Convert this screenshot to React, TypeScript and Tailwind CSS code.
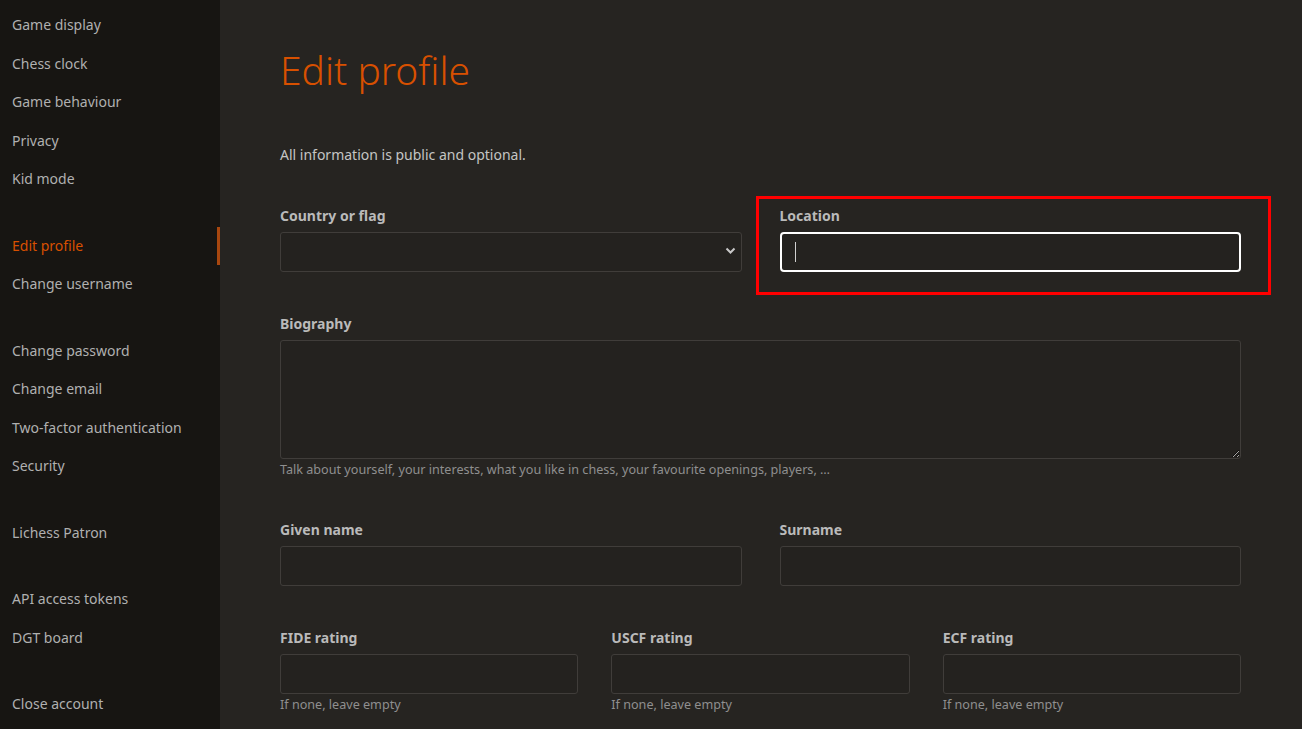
import React from 'react';

const groups = [
  ['Game display', 'Chess clock', 'Game behaviour', 'Privacy', 'Kid mode'],
  ['Edit profile', 'Change username'],
  ['Change password', 'Change email', 'Two-factor authentication', 'Security'],
  ['Lichess Patron'],
  ['API access tokens', 'DGT board'],
  ['Close account'],
];

const Sidebar = () => {
  return (
    <nav className="w-[220px] shrink-0 bg-[#171512] pt-[6px] min-h-screen">
      {groups.map((group, gi) => (
        <div key={gi} className="mb-[28px]">
          {group.map((item) => {
            const active = item === 'Edit profile';
            return (
              <a
                key={item}
                className={
                  active
                    ? 'block px-[12px] py-[10px] text-[14px] leading-[18.5px] text-[#d85000] border-r-[3px] border-[#a8470f]'
                    : 'block px-[12px] py-[10px] text-[14px] leading-[18.5px] text-[#b0b0b0]'
                }
              >
                {item}
              </a>
            );
          })}
        </div>
      ))}
    </nav>
  );
};

const inputCls =
  'block w-full h-[40px] bg-[#24221f] border border-[#403d3a] rounded-[3px] outline-none';

const Label = ({ children }: { children: React.ReactNode }) => (
  <label className="block text-[14px] leading-[20px] font-bold text-[#bababa] mb-[6px]">
    {children}
  </label>
);

const Help = ({ children }: { children: React.ReactNode }) => (
  <p className="mt-[2px] text-[12.6px] leading-[17px] text-[#8f8f8f]">{children}</p>
);

const ProfileForm = () => {
  return (
    <main className="flex-1 bg-[#262421] pl-[60px] pr-[61px] pt-[44px]">
      <h1 className="text-[39px] leading-[52px] font-light text-[#d85000] mb-[49px]">Edit profile</h1>
      <p className="text-[14px] leading-[20px] text-[#c4c4c4] mb-[41px]">All information is public and optional.</p>

      <div className="grid grid-cols-2 gap-x-[38px] mb-[42px]">
        <div>
          <Label>Country or flag</Label>
          <div className="relative">
            <select className={inputCls + ' appearance-none'} />
            <svg
              className="absolute right-[6px] top-[15px] pointer-events-none"
              width="11"
              height="8"
              viewBox="0 0 11 8"
            >
              <path d="M1.5 1.5 L5.5 5.5 L9.5 1.5" stroke="#c8c8c8" strokeWidth="2" fill="none" />
            </svg>
          </div>
        </div>
        <div className="relative">
          <div className="absolute -left-[24px] -right-[30px] -top-[10px] -bottom-[23px] border-[3px] border-[#ff0000] pointer-events-none" />
          <Label>Location</Label>
          <div className="relative">
            <input className="block w-full h-[40px] bg-[#24221f] border-2 border-white rounded-[4px] outline-none" />
            <span className="absolute left-[15px] top-[10px] w-px h-[20px] bg-[#d0d0d0]" />
          </div>
        </div>
      </div>

      <div className="mb-[42px]">
        <Label>Biography</Label>
        <textarea className="block w-full h-[119px] bg-[#24221f] border border-[#403d3a] rounded-[3px] outline-none resize-y [color-scheme:dark]" />
        <Help>Talk about yourself, your interests, what you like in chess, your favourite openings, players, …</Help>
      </div>

      <div className="grid grid-cols-2 gap-x-[38px] mb-[42px]">
        <div>
          <Label>Given name</Label>
          <input className={inputCls} />
        </div>
        <div>
          <Label>Surname</Label>
          <input className={inputCls} />
        </div>
      </div>

      <div className="grid grid-cols-3 gap-x-[33px]">
        {['FIDE rating', 'USCF rating', 'ECF rating'].map((r) => (
          <div key={r}>
            <Label>{r}</Label>
            <input className={inputCls} />
            <Help>If none, leave empty</Help>
          </div>
        ))}
      </div>
    </main>
  );
};

const App = () => {
  return (
    <div className="flex h-[729px] overflow-hidden font-['Noto_Sans',sans-serif]">
      <Sidebar />
      <ProfileForm />
    </div>
  );
};

export default App;
